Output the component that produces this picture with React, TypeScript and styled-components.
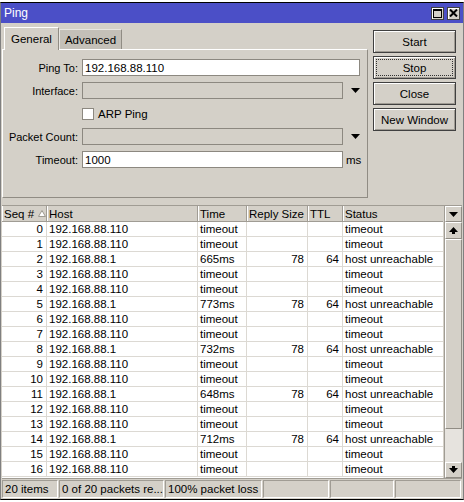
import React, { FC } from "react";
import styled, { createGlobalStyle } from "styled-components";

const GlobalStyle = createGlobalStyle`
	html, body {
		margin: 0;
		padding: 0;
		background: #ffffff;
	}
	body {
		font-family: "Liberation Sans", Arial, sans-serif;
		font-size: 11px;
		color: #000;
	}
`;

const Window = styled.div`
	width: 464px;
	height: 498px;
	margin-top: 2px;
	box-sizing: border-box;
	border-top: 1px solid #000;
	border-bottom: 1px solid #000;
	border-left: 1px solid #808080;
	border-right: 1px solid #808080;
	background: #d4d0c8;
	display: flex;
	flex-direction: column;
	overflow: hidden;
`;

const TitleBar = styled.div`
	height: 20px;
	background: #4b4fc7;
	display: flex;
	align-items: center;
	justify-content: space-between;
	padding: 0 3px 0 3px;
	flex-shrink: 0;
`;

const TitleText = styled.span`
	color: #fff;
	font-size: 12px;
`;

const TitleButtons = styled.div`
	display: flex;
	gap: 3px;
`;

const TitleButton = styled.div`
	width: 13px;
	height: 13px;
	box-sizing: border-box;
	background: #d4d0c8;
	border: 1px solid #404040;
	box-shadow: inset 1px 1px #fff;
	display: flex;
	align-items: center;
	justify-content: center;
`;

const Body = styled.div`
	flex: 1;
	display: flex;
	flex-direction: column;
	padding: 3px 1px 0 1px;
	min-height: 0;
`;

const TopArea = styled.div`
	display: flex;
	height: 172px;
	flex-shrink: 0;
`;

const TabsColumn = styled.div`
	width: 366px;
	display: flex;
	flex-direction: column;
`;

const TabStrip = styled.div`
	display: flex;
	align-items: flex-end;
	height: 23px;
	padding-left: 2px;
`;

const Tab = styled.div<{ $active?: boolean }>`
	height: ${(p) => (p.$active ? "23px" : "20px")};
	padding: 0 ${(p) => (p.$active ? "6px" : "5px")};
	box-sizing: border-box;
	display: flex;
	align-items: center;
	background: ${(p) => (p.$active ? "#d4d0c8" : "#c4c0b8")};
	border-top: 1px solid ${(p) => (p.$active ? "#fff" : "#e8e6e2")};
	border-left: 1px solid ${(p) => (p.$active ? "#fff" : "#e8e6e2")};
	border-right: 1px solid #908c84;
	margin-bottom: ${(p) => (p.$active ? "-1px" : "0")};
	position: relative;
	z-index: ${(p) => (p.$active ? 1 : 0)};
	font-size: 11.5px;
`;

const Panel = styled.div`
	flex: 1;
	border-top: 1px solid #fff;
	border-left: 1px solid #fff;
	border-right: 1px solid #908c84;
	border-bottom: 1px solid #908c84;
	box-shadow: inset -1px -1px #d4d0c8;
	padding: 9px 0 0 0;
`;

const FormGrid = styled.div`
	display: grid;
	grid-template-columns: 79px 261px 22px;
	grid-auto-rows: 17px;
	row-gap: 6px;
	align-items: center;
`;

const Label = styled.div`
	text-align: right;
	padding-right: 4px;
	white-space: nowrap;
`;

const TextInput = styled.div<{ $disabled?: boolean; $wide?: boolean }>`
	height: 17px;
	box-sizing: border-box;
	background: ${(p) => (p.$disabled ? "#d4d0c8" : "#fff")};
	border: 1px solid #8c8880;
	padding: 1px 2px 0 2px;
	line-height: 14px;
	grid-column: ${(p) => (p.$wide ? "2 / span 2" : "2")};
	width: ${(p) => (p.$wide ? "278px" : "auto")};
	font-size: 11.5px;
`;

const DropArrow = styled.div`
	display: flex;
	justify-content: center;
	padding-left: 2px;
`;

const Unit = styled.div`
	padding-left: 3px;
	font-size: 11.5px;
`;

const CheckRow = styled.div`
	grid-column: 2 / span 2;
	display: flex;
	align-items: center;
	gap: 4px;
	font-size: 11.5px;
`;

const CheckBox = styled.div`
	width: 12px;
	height: 12px;
	box-sizing: border-box;
	background: #fff;
	border: 1px solid #8c8880;
`;

const ButtonColumn = styled.div`
	display: flex;
	flex-direction: column;
	gap: 3px;
	margin-left: 5px;
	padding-top: 4px;
	width: 83px;
`;

const ActionButton = styled.div<{ $focused?: boolean }>`
	height: 23px;
	box-sizing: border-box;
	border: 1px solid #404040;
	box-shadow: inset 1px 1px #fff, inset -1px -1px #a09c94;
	background: #d4d0c8;
	display: flex;
	align-items: center;
	justify-content: center;
	position: relative;
	font-size: 11.5px;
	&::after {
		content: "";
		display: ${(p) => (p.$focused ? "block" : "none")};
		position: absolute;
		inset: 2px;
		border: 1px dotted #303030;
	}
`;

const TableArea = styled.div`
	margin-top: 7px;
	display: flex;
	height: 272px;
	flex-shrink: 0;
	border-top: 1px solid #a09c94;
`;

const Grid = styled.div`
	width: 442px;
	display: flex;
	flex-direction: column;
	background: #fff;
	overflow: hidden;
`;

const COLS = "45px 151px 49px 61px 35px 101px";

const HeaderRow = styled.div`
	display: grid;
	grid-template-columns: ${COLS};
	height: 16px;
	background: #d4d0c8;
	border-bottom: 1px solid #a09c94;
	box-sizing: border-box;
`;

const HeaderCell = styled.div`
	display: flex;
	align-items: center;
	gap: 4px;
	padding-left: 2px;
	border-right: 1px solid #a09c94;
	box-shadow: inset 1px 0 #fff;
	font-size: 11.5px;
	white-space: nowrap;
	overflow: hidden;
`;

const Row = styled.div`
	display: grid;
	grid-template-columns: ${COLS};
	height: 15px;
	box-sizing: border-box;
	border-bottom: 1px solid #dcd9d3;
`;

const Cell = styled.div<{ $right?: boolean }>`
	padding: 0 3px 0 2px;
	line-height: 14px;
	text-align: ${(p) => (p.$right ? "right" : "left")};
	border-right: 1px solid #dcd9d3;
	white-space: nowrap;
	overflow: hidden;
	font-size: 11.5px;
`;

const ScrollColumn = styled.div`
	width: 17px;
	margin-left: 1px;
	display: flex;
	flex-direction: column;
	background: #d4d0c8;
	border-left: 1px solid #a09c94;
`;

const ScrollButton = styled.div<{ $h?: number }>`
	height: ${(p) => p.$h ?? 16}px;
	box-sizing: border-box;
	border: 1px solid #908c84;
	border-top-color: #fff;
	border-left-color: #fff;
	display: flex;
	align-items: center;
	justify-content: center;
	flex-shrink: 0;
`;

const Thumb = styled.div`
	height: 190px;
	box-sizing: border-box;
	border: 1px solid #908c84;
	border-top-color: #fff;
	border-left-color: #fff;
	flex-shrink: 0;
`;

const Track = styled.div`
	flex: 1;
	background: #e6e3de;
`;

const StatusBar = styled.div`
	flex: 1;
	display: flex;
	padding: 1px 0 1px 0;
	border-top: 1px solid #a09c94;
`;

const StatusCell = styled.div<{ $w: number }>`
	width: ${(p) => p.$w}px;
	box-sizing: border-box;
	margin-right: 1px;
	border-top: 1px solid #a09c94;
	border-left: 1px solid #a09c94;
	border-right: 1px solid #fff;
	border-bottom: 1px solid #fff;
	padding: 0 2px;
	display: flex;
	align-items: center;
	white-space: nowrap;
	overflow: hidden;
	font-size: 11.5px;
`;

const Triangle: FC<{ up?: boolean }> = ({ up }) => (
	<svg width="9" height="5" viewBox="0 0 9 5">
		<path d={up ? "M0 5 L4.5 0 L9 5 Z" : "M0 0 L9 0 L4.5 5 Z"} fill="#000" />
	</svg>
);

const ArrowIcon: FC<{ up?: boolean }> = ({ up }) => (
	<svg width="9" height="8" viewBox="0 0 9 8">
		<path
			d={up ? "M4.5 0 L9 5 L6 5 L6 7 L3 7 L3 5 L0 5 Z" : "M3 0 L6 0 L6 2 L9 2 L4.5 7 L0 2 L3 2 Z"}
			fill="#000"
		/>
	</svg>
);

const SortIcon = () => (
	<svg width="8" height="7" viewBox="0 0 8 7">
		<path d="M4 0.5 L7.5 6.5 L0.5 6.5 Z" fill="#fff" stroke="#9c988f" strokeWidth="1" />
	</svg>
);

type PingRow = [number, string, string, string, string, string];

const LAN = "192.168.88.110";
const GW = "192.168.88.1";
const t = (n: number): PingRow => [n, LAN, "timeout", "", "", "timeout"];
const u = (n: number, ms: string): PingRow => [n, GW, ms, "78", "64", "host unreachable"];

const rows: PingRow[] = [
	t(0), t(1), u(2, "665ms"), t(3), t(4), u(5, "773ms"), t(6), t(7),
	u(8, "732ms"), t(9), t(10), u(11, "648ms"), t(12), t(13), u(14, "712ms"),
	t(15), t(16),
];

export default function App() {
	return (
		<>
			<GlobalStyle />
			<Window>
				<TitleBar>
					<TitleText>Ping</TitleText>
					<TitleButtons>
						<TitleButton>
							<svg width="9" height="9" viewBox="0 0 9 9">
								<rect x="0.5" y="0.5" width="8" height="8" fill="none" stroke="#000" />
								<rect x="0" y="0" width="9" height="2" fill="#000" />
							</svg>
						</TitleButton>
						<TitleButton>
							<svg width="9" height="8" viewBox="0 0 9 8">
								<path d="M1 0.5 L8 7.5 M8 0.5 L1 7.5" stroke="#000" strokeWidth="2" />
							</svg>
						</TitleButton>
					</TitleButtons>
				</TitleBar>
				<Body>
					<TopArea>
						<TabsColumn>
							<TabStrip>
								<Tab $active>General</Tab>
								<Tab>Advanced</Tab>
							</TabStrip>
							<Panel>
								<FormGrid>
									<Label>Ping To:</Label>
									<TextInput $wide>192.168.88.110</TextInput>
									<Label>Interface:</Label>
									<TextInput $disabled />
									<DropArrow><Triangle /></DropArrow>
									<div />
									<CheckRow>
										<CheckBox />
										ARP Ping
									</CheckRow>
									<Label>Packet Count:</Label>
									<TextInput $disabled />
									<DropArrow><Triangle /></DropArrow>
									<Label>Timeout:</Label>
									<TextInput>1000</TextInput>
									<Unit>ms</Unit>
								</FormGrid>
							</Panel>
						</TabsColumn>
						<ButtonColumn>
							<ActionButton>Start</ActionButton>
							<ActionButton $focused>Stop</ActionButton>
							<ActionButton>Close</ActionButton>
							<ActionButton>New Window</ActionButton>
						</ButtonColumn>
					</TopArea>
					<TableArea>
						<Grid>
							<HeaderRow>
								<HeaderCell>Seq # <SortIcon /></HeaderCell>
								<HeaderCell>Host</HeaderCell>
								<HeaderCell>Time</HeaderCell>
								<HeaderCell>Reply Size</HeaderCell>
								<HeaderCell>TTL</HeaderCell>
								<HeaderCell>Status</HeaderCell>
							</HeaderRow>
							{rows.map((r) => (
								<Row key={r[0]}>
									<Cell $right>{r[0]}</Cell>
									<Cell>{r[1]}</Cell>
									<Cell>{r[2]}</Cell>
									<Cell $right>{r[3]}</Cell>
									<Cell $right>{r[4]}</Cell>
									<Cell>{r[5]}</Cell>
								</Row>
							))}
						</Grid>
						<ScrollColumn>
							<ScrollButton $h={16}><Triangle /></ScrollButton>
							<ScrollButton $h={17}><ArrowIcon up /></ScrollButton>
							<Thumb />
							<Track />
							<ScrollButton $h={16}><ArrowIcon /></ScrollButton>
						</ScrollColumn>
					</TableArea>
					<StatusBar>
						<StatusCell $w={56}>20 items</StatusCell>
						<StatusCell $w={105}>0 of 20 packets re...</StatusCell>
						<StatusCell $w={97}>100% packet loss</StatusCell>
						<StatusCell $w={66} />
						<StatusCell $w={64} />
						<StatusCell $w={66} />
					</StatusBar>
				</Body>
			</Window>
		</>
	);
}
